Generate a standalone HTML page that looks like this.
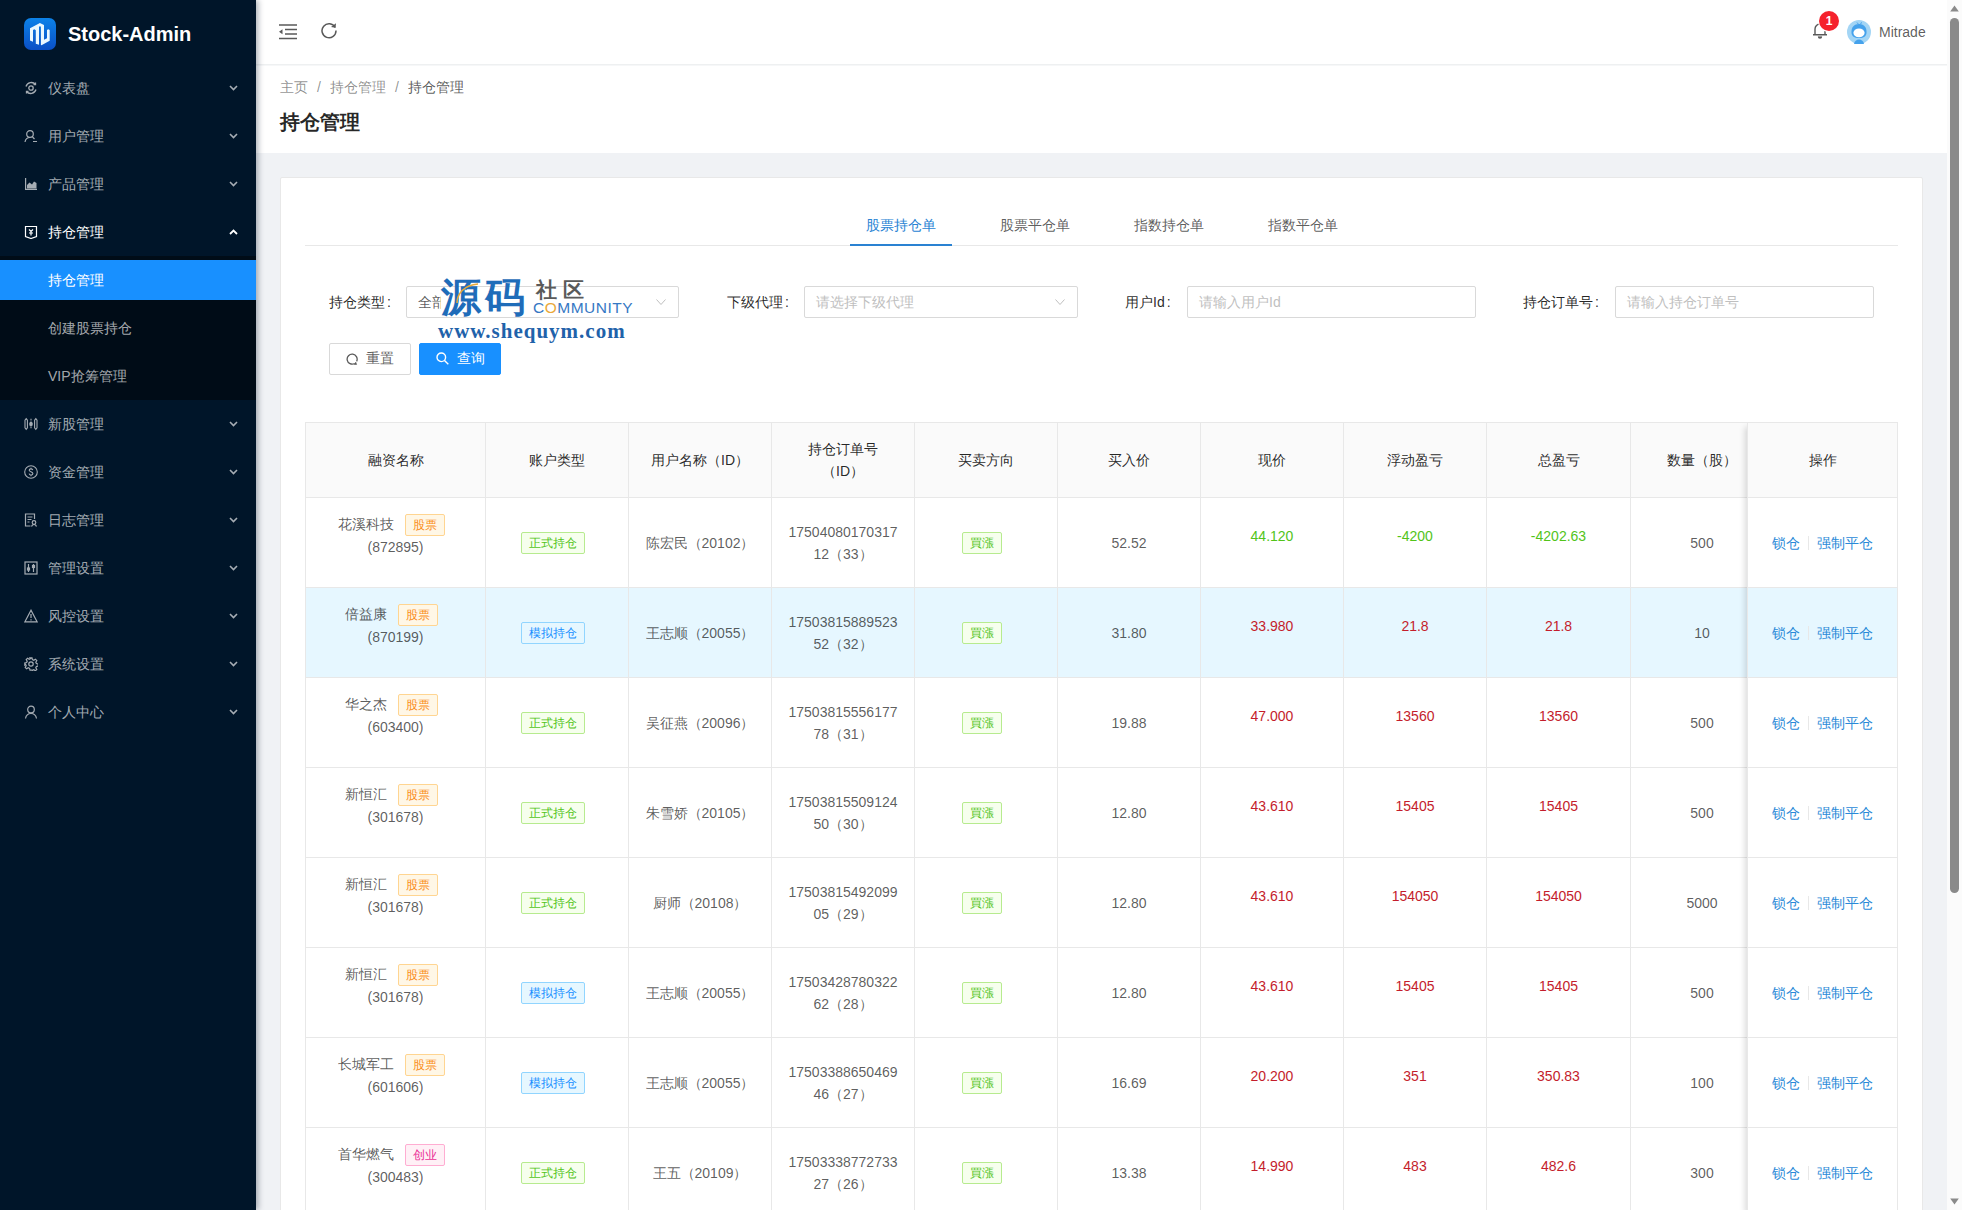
<!DOCTYPE html>
<html><head><meta charset="utf-8">
<style>
*{box-sizing:border-box;margin:0;padding:0}
html,body{width:1962px;height:1210px;overflow:hidden}
body{position:relative;background:#f0f2f5;font-family:"Liberation Sans",sans-serif;font-size:14px;color:rgba(0,0,0,.65)}
.abs{position:absolute}
/* sidebar */
#side{position:absolute;left:0;top:0;width:256px;height:1210px;background:#001529;z-index:5;box-shadow:2px 0 6px rgba(0,21,41,.35)}
.logo{position:absolute;left:24px;top:18px;width:32px;height:32px;border-radius:7px;background:linear-gradient(#0c82e8,#0a4fc6)}
.brand{position:absolute;left:68px;top:21px;font-size:20px;font-weight:bold;color:#fff;line-height:26px}
.mi{position:absolute;left:0;width:256px;height:40px;line-height:40px;color:rgba(255,255,255,.65)}
.mi .ic{position:absolute;left:24px;top:13px;width:14px;height:14px}
.mi .tx{position:absolute;left:48px;top:0}
.mi .ar{position:absolute;left:229px;top:17px;width:9px;height:6px}
.sub{position:absolute;left:0;top:256px;width:256px;height:144px;background:#000c17}
.act{background:#1890ff;color:#fff}
/* header */
#hdr{position:absolute;left:256px;top:0;width:1691px;height:64px;background:#fff;z-index:2}
#ph{position:absolute;left:256px;top:65px;width:1691px;height:88px;background:#fff}
/* scrollbar */
#sb{position:absolute;left:1947px;top:0;width:15px;height:1210px;background:#fbfbfb;z-index:6}
/* card */
#card{position:absolute;left:280px;top:177px;width:1643px;height:1100px;background:#fff;border:1px solid #e8e8e8;border-radius:2px}
.tabbar{position:absolute;left:24px;top:23px;width:1593px;height:45px;border-bottom:1px solid #e8e8e8}
.tab{position:absolute;top:0;height:45px;width:102px;text-align:center;line-height:49px;color:rgba(0,0,0,.65)}
.tab.on{color:#2a84d4}
.ink{position:absolute;left:569px;top:43px;width:102px;height:2px;background:#1890ff}
.lbl{position:absolute;top:108px;height:32px;line-height:32px;color:rgba(0,0,0,.85)}
.inp{position:absolute;top:108px;height:32px;border:1px solid #d9d9d9;border-radius:2px;line-height:30px;padding-left:11px;color:#bfbfbf}
.sel-ar{position:absolute;right:12px;top:12px;width:10px;height:6px}
.btn{position:absolute;top:165px;height:32px;width:82px;border-radius:2px;line-height:28px;padding-bottom:2px;text-align:center}
/* table */
#tbl{position:absolute;left:24px;top:244px;width:1593px;height:900px;border:1px solid #e8e8e8;border-bottom:0;overflow:hidden}
table{border-collapse:separate;border-spacing:0;table-layout:fixed}
th,td{border-right:1px solid #e8e8e8;border-bottom:1px solid #e8e8e8;text-align:center;vertical-align:middle;padding:0 16px;line-height:22px}
th{background:#fafafa;color:rgba(0,0,0,.85);font-weight:normal;height:75px}
td{height:90px}
tr.hv td{background:#e6f7ff}
.tag{display:inline-block;height:22px;line-height:20px;padding:0 7px;font-size:12px;border:1px solid;border-radius:2px;margin-right:8px;vertical-align:middle}
.t-or{color:#fa8c16;background:#fff7e6;border-color:#ffd591}
.t-gr{color:#52c41a;background:#f6ffed;border-color:#b7eb8f}
.t-bl{color:#1890ff;background:#e6f7ff;border-color:#91d5ff}
.t-mg{color:#eb2f96;background:#fff0f6;border-color:#ffadd2}
.g{color:#52c41a}
.r{color:#c41d2c}
.up{position:relative;top:-7px}
.nm{position:relative;top:-7px}
#fix{position:absolute;left:1441px;top:0;width:150px;border-left:1px solid #e8e8e8;box-shadow:-6px 0 6px -4px rgba(0,0,0,.15);background:#fff}
#fix table td,#fix table th{border-right:0}
.lk{color:#2a8ad8}
.dv{display:inline-block;width:1px;height:14px;background:#e8e8e8;margin:0 8px;vertical-align:middle;position:relative;top:-1px}
</style></head>
<body>
<div id="side">
  <div class="logo">
    <svg width="32" height="32" viewBox="0 0 32 32"><path fill="#eaf8ff" d="M6 22.6V10.2L15.9 5 20 6.9V21.8L23 20.3V12L24.3 11.2 25.7 12V22.7L17.5 27.2 16.9 27V8.4L15 8.6V26.8L11.8 25.8V12.2L10.4 11.3 9 12.1V23.8Z"/></svg>
  </div>
  <div class="brand">Stock-Admin</div>
  <!-- menu -->
  <div class="mi" style="top:68px"><svg class="ic" viewBox="0 0 14 14" fill="none" stroke="#a6adb4" stroke-width="1.3"><path d="M2 5.5A5.5 5.5 0 0 1 11.5 3.5M12 8.5A5.5 5.5 0 0 1 2.5 10.5"/><circle cx="7" cy="7" r="2.2"/><path d="M11.5 1.5v2h-2M2.5 12.5v-2h2"/></svg><span class="tx">仪表盘</span><svg class="ar" viewBox="0 0 9 6"><path d="M1 1l3.5 3.5L8 1" stroke="#a6adb4" stroke-width="1.6" fill="none"/></svg></div>
  <div class="mi" style="top:116px"><svg class="ic" viewBox="0 0 14 14" fill="none" stroke="#a6adb4" stroke-width="1.2"><circle cx="6" cy="5" r="3.3"/><path d="M1 13c.5-3 2.5-4.5 5-4.5M9 12.5h4M8.5 8l2 2"/></svg><span class="tx">用户管理</span><svg class="ar" viewBox="0 0 9 6"><path d="M1 1l3.5 3.5L8 1" stroke="#a6adb4" stroke-width="1.6" fill="none"/></svg></div>
  <div class="mi" style="top:164px"><svg class="ic" viewBox="0 0 14 14"><path d="M1 1v12h12v-1.2H2.2V1z" fill="#a6adb4"/><path d="M3 11.5V8l2.5-2.5 2.5 2 2-3 2.5 1.5v5.5z" fill="#a6adb4"/></svg><span class="tx">产品管理</span><svg class="ar" viewBox="0 0 9 6"><path d="M1 1l3.5 3.5L8 1" stroke="#a6adb4" stroke-width="1.6" fill="none"/></svg></div>
  <div class="mi" style="top:212px;color:#fff"><svg class="ic" viewBox="0 0 14 14" fill="none" stroke="#fff" stroke-width="1.2"><path d="M1.5 1.5h11v10l-5.5 2-5.5-2z"/><path d="M5 4.5l2 2 2-2M7 6.5v4M5 8h4"/></svg><span class="tx">持仓管理</span><svg class="ar" viewBox="0 0 9 6"><path d="M1 5l3.5-3.5L8 5" stroke="#fff" stroke-width="1.8" fill="none"/></svg></div>
  <div class="sub"></div>
  <div class="mi act" style="top:260px;color:#fff"><span class="tx">持仓管理</span></div>
  <div class="mi" style="top:308px"><span class="tx">创建股票持仓</span></div>
  <div class="mi" style="top:356px"><span class="tx">VIP抢筹管理</span></div>
  <div class="mi" style="top:404px"><svg class="ic" viewBox="0 0 14 14" fill="none" stroke="#a6adb4" stroke-width="1.1"><path d="M2.2 1.6L3.4 3.2V10.8L2.2 12.4 1 10.8V3.2z"/><path d="M11.8 1.6L13 3.2V10.8L11.8 12.4 10.6 10.8V3.2z"/><path d="M7 1.8v10.4" stroke-dasharray="1.6 1"/><rect x="5.9" y="5.2" width="2.2" height="3.6" rx="1.1" fill="#a6adb4"/></svg><span class="tx">新股管理</span><svg class="ar" viewBox="0 0 9 6"><path d="M1 1l3.5 3.5L8 1" stroke="#a6adb4" stroke-width="1.6" fill="none"/></svg></div>
  <div class="mi" style="top:452px"><svg class="ic" viewBox="0 0 14 14" fill="none" stroke="#a6adb4" stroke-width="1.1"><circle cx="7" cy="7" r="6.3"/><path d="M8.8 5.2C8.6 4.3 7.9 3.9 7 3.9 5.9 3.9 5.2 4.5 5.2 5.3 5.2 7 8.9 6.6 8.9 8.6 8.9 9.5 8.1 10.1 7 10.1 6 10.1 5.3 9.6 5.1 8.7M7 2.8v1.1M7 10.1v1.1"/></svg><span class="tx">资金管理</span><svg class="ar" viewBox="0 0 9 6"><path d="M1 1l3.5 3.5L8 1" stroke="#a6adb4" stroke-width="1.6" fill="none"/></svg></div>
  <div class="mi" style="top:500px"><svg class="ic" viewBox="0 0 14 14" fill="none" stroke="#a6adb4" stroke-width="1.2"><path d="M10.5 6V1H1.5v12h5"/><path d="M3.5 4h5M3.5 6.5h4M3.5 9h2"/><circle cx="10" cy="9.5" r="1.8"/><path d="M7.5 13.5c.5-1.5 1.5-2 2.5-2s2 .5 2.5 2"/></svg><span class="tx">日志管理</span><svg class="ar" viewBox="0 0 9 6"><path d="M1 1l3.5 3.5L8 1" stroke="#a6adb4" stroke-width="1.6" fill="none"/></svg></div>
  <div class="mi" style="top:548px"><svg class="ic" viewBox="0 0 14 14" fill="none" stroke="#a6adb4" stroke-width="1.2"><rect x="1" y="1" width="12" height="12"/><path d="M4.5 3v8M9.5 3v8"/><rect x="3.5" y="7" width="2" height="2" fill="#a6adb4"/><rect x="8.5" y="4.5" width="2" height="2" fill="#a6adb4"/></svg><span class="tx">管理设置</span><svg class="ar" viewBox="0 0 9 6"><path d="M1 1l3.5 3.5L8 1" stroke="#a6adb4" stroke-width="1.6" fill="none"/></svg></div>
  <div class="mi" style="top:596px"><svg class="ic" viewBox="0 0 14 14" fill="none" stroke="#a6adb4" stroke-width="1.2"><path d="M7 1.2L0.9 12.8h12.2z"/><path d="M7 5v4M7 10.2v1.2"/></svg><span class="tx">风控设置</span><svg class="ar" viewBox="0 0 9 6"><path d="M1 1l3.5 3.5L8 1" stroke="#a6adb4" stroke-width="1.6" fill="none"/></svg></div>
  <div class="mi" style="top:644px"><svg class="ic" viewBox="0 0 14 14" fill="none" stroke="#a6adb4" stroke-width="1.2"><path d="M6 .8h2l.4 1.8 1.4.6 1.6-1 1.4 1.4-1 1.6.6 1.4 1.8.4v2l-1.8.4-.6 1.4 1 1.6-1.4 1.4-1.6-1-1.4.6L8 13.2H6l-.4-1.8-1.4-.6-1.6 1-1.4-1.4 1-1.6-.6-1.4L.8 8V6l1.8-.4.6-1.4-1-1.6 1.4-1.4 1.6 1 1.4-.6z"/><circle cx="7" cy="7" r="2.2"/></svg><span class="tx">系统设置</span><svg class="ar" viewBox="0 0 9 6"><path d="M1 1l3.5 3.5L8 1" stroke="#a6adb4" stroke-width="1.6" fill="none"/></svg></div>
  <div class="mi" style="top:692px"><svg class="ic" viewBox="0 0 14 14" fill="none" stroke="#a6adb4" stroke-width="1.2"><circle cx="7" cy="4.5" r="3.3"/><path d="M1.5 13.5c.5-3 2.8-5 5.5-5s5 2 5.5 5"/></svg><span class="tx">个人中心</span><svg class="ar" viewBox="0 0 9 6"><path d="M1 1l3.5 3.5L8 1" stroke="#a6adb4" stroke-width="1.6" fill="none"/></svg></div>
</div>

<div id="hdr">
  <svg class="abs" style="left:23px;top:24px" width="18" height="16" viewBox="0 0 18 16"><path d="M0 1h18M6 5.5h12M6 10h12M0 14.5h18" stroke="#595959" stroke-width="1.6"/><path d="M0 7.7L3.5 5.2v5z" fill="#595959"/></svg>
  <svg class="abs" style="left:64px;top:21px" width="18" height="18" viewBox="0 0 18 18" fill="none" stroke="#595959" stroke-width="1.5"><path d="M15.2 6.5A7 7 0 1 0 16 9.5"/><path d="M15.8 1.8v5h-5" stroke-width="0"/><path d="M16 2.2L15.5 6.8 11 6" fill="#595959" stroke-width="0"/></svg>
  <!-- bell -->
  <svg class="abs" style="left:1556px;top:21px" width="16" height="18" viewBox="0 0 16 18" fill="none" stroke="#595959" stroke-width="1.4"><path d="M3 13.5V8a5 5 0 0 1 10 0v5.5M1 13.8h14"/><path d="M6.5 15.5a1.5 1.5 0 0 0 3 0" fill="#595959"/></svg>
  <div class="abs" style="left:1563px;top:11px;width:20px;height:20px;border-radius:10px;background:#f5222d;color:#fff;font-size:12px;font-weight:bold;line-height:20px;text-align:center;box-shadow:0 0 0 1px #fff">1</div>
  <!-- avatar -->
  <svg class="abs" style="left:1591px;top:20px" width="24" height="24" viewBox="0 0 24 24"><circle cx="12" cy="12" r="12" fill="#a3d5f5"/><path d="M4.5 13C4 7 7.5 4 12 4s8 3 7.5 9c-.3 3-2.5 5-7.5 5s-7.2-2-7.5-5z" fill="#45a2ec"/><ellipse cx="12" cy="12.8" rx="5.6" ry="4.4" fill="#fff"/><path d="M7 24c.5-3 2.5-4.5 5-4.5s4.5 1.5 5 4.5z" fill="#45a2ec"/><path d="M10 2.5l1.5 1.8M14.5 2.3l-1 2" stroke="#45a2ec" stroke-width="1"/></svg>
  <div class="abs" style="left:1623px;top:21px;line-height:22px;color:rgba(0,0,0,.65)">Mitrade</div>
</div>
<div class="abs" style="left:256px;top:64px;width:1691px;height:1px;background:#eef0f1;z-index:3"></div><div class="abs" style="left:256px;top:65px;width:1691px;height:1px;background:#f6f7f8;z-index:3"></div>
<div id="ph">
  <div class="abs" style="left:24px;top:11px;line-height:22px;color:rgba(0,0,0,.45)">主页<span style="margin:0 9px">/</span>持仓管理<span style="margin:0 9px">/</span><span style="color:rgba(0,0,0,.65)">持仓管理</span></div>
  <div class="abs" style="left:24px;top:43px;line-height:28px;font-size:20px;font-weight:bold;color:rgba(0,0,0,.85)">持仓管理</div>
</div>

<div id="sb">
  <svg class="abs" style="left:3px;top:5px" width="9" height="7" viewBox="0 0 9 7"><path d="M4.5 0.5L8.8 6.5H0.2z" fill="#8a8a8a"/></svg>
  <div class="abs" style="left:3px;top:18px;width:9px;height:875px;border-radius:4.5px;background:#8a8a8a"></div>
  <svg class="abs" style="left:3px;top:1198px" width="9" height="7" viewBox="0 0 9 7"><path d="M4.5 6.5L8.8 0.5H0.2z" fill="#8a8a8a"/></svg>
</div>

<div id="card">
  <div class="tabbar">
    <div class="tab on" style="left:545px">股票持仓单</div>
    <div class="tab" style="left:679px">股票平仓单</div>
    <div class="tab" style="left:813px">指数持仓单</div>
    <div class="tab" style="left:947px">指数平仓单</div>
    <div class="abs" style="left:545px;top:43px;width:102px;height:2px;background:#2a82d2"></div>
  </div>
  <!-- filters -->
  <div class="lbl" style="left:48px">持仓类型<span style="margin-left:2px">:</span></div>
  <div class="inp" style="left:125px;width:273px;color:rgba(0,0,0,.65)">全部<svg class="sel-ar" viewBox="0 0 10 6"><path d="M.5.5l4.5 5 4.5-5" stroke="#bfbfbf" fill="none"/></svg></div>
  <div class="lbl" style="left:446px">下级代理<span style="margin-left:2px">:</span></div>
  <div class="inp" style="left:523px;width:274px">请选择下级代理<svg class="sel-ar" viewBox="0 0 10 6"><path d="M.5.5l4.5 5 4.5-5" stroke="#bfbfbf" fill="none"/></svg></div>
  <div class="lbl" style="left:844px">用户Id<span style="margin-left:2px">:</span></div>
  <div class="inp" style="left:906px;width:289px">请输入用户Id</div>
  <div class="lbl" style="left:1242px">持仓订单号<span style="margin-left:2px">:</span></div>
  <div class="inp" style="left:1334px;width:259px">请输入持仓订单号</div>
  <div class="btn" style="left:48px;border:1px solid #d9d9d9;color:rgba(0,0,0,.65)"><svg style="vertical-align:-2px;margin-right:8px" width="12" height="12" viewBox="0 0 12 12" fill="none" stroke="#595959" stroke-width="1.3"><path d="M10.6 8.4A5 5 0 1 0 8.6 10.5"/><path d="M9.8 9.2l-1.6 2.2 2.4.1z" fill="#595959" stroke-width="0.6"/></svg>重置</div>
  <div class="btn" style="left:138px;background:#1890ff;border:1px solid #1890ff;color:#fff"><svg style="vertical-align:-2px;margin-right:8px" width="13" height="13" viewBox="0 0 13 13" fill="none" stroke="#fff" stroke-width="1.4"><circle cx="5.3" cy="5.3" r="4.3"/><path d="M8.5 8.5l3.8 3.8"/></svg>查询</div>

  <!-- TABLE -->
  <div id="tbl">
<table style="width:1468px">
<colgroup><col style="width:180px"><col style="width:143px"><col style="width:143px"><col style="width:143px"><col style="width:143px"><col style="width:143px"><col style="width:143px"><col style="width:143px"><col style="width:144px"><col style="width:143px"></colgroup>
<tr><th>融资名称</th><th>账户类型</th><th>用户名称（ID）</th><th>持仓订单号<br>（ID）</th><th>买卖方向</th><th>买入价</th><th>现价</th><th>浮动盈亏</th><th>总盈亏</th><th>数量（股）</th></tr>
<tr><td><div class="nm">花溪科技<span class="tag t-or" style="margin-left:11px">股票</span><br>(872895)</div></td><td><span class="tag t-gr">正式持仓</span></td><td>陈宏民（20102）</td><td>17504080170317<br>12（33）</td><td><span class="tag t-gr">買漲</span></td><td>52.52</td><td class="g"><span class="up">44.120</span></td><td class="g"><span class="up">-4200</span></td><td class="g"><span class="up">-4202.63</span></td><td>500</td></tr>
<tr class="hv"><td><div class="nm">倍益康<span class="tag t-or" style="margin-left:11px">股票</span><br>(870199)</div></td><td><span class="tag t-bl">模拟持仓</span></td><td>王志顺（20055）</td><td>17503815889523<br>52（32）</td><td><span class="tag t-gr">買漲</span></td><td>31.80</td><td class="r"><span class="up">33.980</span></td><td class="r"><span class="up">21.8</span></td><td class="r"><span class="up">21.8</span></td><td>10</td></tr>
<tr><td><div class="nm">华之杰<span class="tag t-or" style="margin-left:11px">股票</span><br>(603400)</div></td><td><span class="tag t-gr">正式持仓</span></td><td>吴征燕（20096）</td><td>17503815556177<br>78（31）</td><td><span class="tag t-gr">買漲</span></td><td>19.88</td><td class="r"><span class="up">47.000</span></td><td class="r"><span class="up">13560</span></td><td class="r"><span class="up">13560</span></td><td>500</td></tr>
<tr><td><div class="nm">新恒汇<span class="tag t-or" style="margin-left:11px">股票</span><br>(301678)</div></td><td><span class="tag t-gr">正式持仓</span></td><td>朱雪娇（20105）</td><td>17503815509124<br>50（30）</td><td><span class="tag t-gr">買漲</span></td><td>12.80</td><td class="r"><span class="up">43.610</span></td><td class="r"><span class="up">15405</span></td><td class="r"><span class="up">15405</span></td><td>500</td></tr>
<tr><td><div class="nm">新恒汇<span class="tag t-or" style="margin-left:11px">股票</span><br>(301678)</div></td><td><span class="tag t-gr">正式持仓</span></td><td>厨师（20108）</td><td>17503815492099<br>05（29）</td><td><span class="tag t-gr">買漲</span></td><td>12.80</td><td class="r"><span class="up">43.610</span></td><td class="r"><span class="up">154050</span></td><td class="r"><span class="up">154050</span></td><td>5000</td></tr>
<tr><td><div class="nm">新恒汇<span class="tag t-or" style="margin-left:11px">股票</span><br>(301678)</div></td><td><span class="tag t-bl">模拟持仓</span></td><td>王志顺（20055）</td><td>17503428780322<br>62（28）</td><td><span class="tag t-gr">買漲</span></td><td>12.80</td><td class="r"><span class="up">43.610</span></td><td class="r"><span class="up">15405</span></td><td class="r"><span class="up">15405</span></td><td>500</td></tr>
<tr><td><div class="nm">长城军工<span class="tag t-or" style="margin-left:11px">股票</span><br>(601606)</div></td><td><span class="tag t-bl">模拟持仓</span></td><td>王志顺（20055）</td><td>17503388650469<br>46（27）</td><td><span class="tag t-gr">買漲</span></td><td>16.69</td><td class="r"><span class="up">20.200</span></td><td class="r"><span class="up">351</span></td><td class="r"><span class="up">350.83</span></td><td>100</td></tr>
<tr><td><div class="nm">首华燃气<span class="tag t-mg" style="margin-left:11px">创业</span><br>(300483)</div></td><td><span class="tag t-gr">正式持仓</span></td><td>王五（20109）</td><td>17503338772733<br>27（26）</td><td><span class="tag t-gr">買漲</span></td><td>13.38</td><td class="r"><span class="up">14.990</span></td><td class="r"><span class="up">483</span></td><td class="r"><span class="up">482.6</span></td><td>300</td></tr>
</table>
<div id="fix"><table style="width:149px"><tr><th>操作</th></tr>
<tr><td style="padding:0"><span class="lk">锁仓</span><span class="dv"></span><span class="lk">强制平仓</span></td></tr>
<tr class="hv"><td style="padding:0"><span class="lk">锁仓</span><span class="dv"></span><span class="lk">强制平仓</span></td></tr>
<tr><td style="padding:0"><span class="lk">锁仓</span><span class="dv"></span><span class="lk">强制平仓</span></td></tr>
<tr><td style="padding:0"><span class="lk">锁仓</span><span class="dv"></span><span class="lk">强制平仓</span></td></tr>
<tr><td style="padding:0"><span class="lk">锁仓</span><span class="dv"></span><span class="lk">强制平仓</span></td></tr>
<tr><td style="padding:0"><span class="lk">锁仓</span><span class="dv"></span><span class="lk">强制平仓</span></td></tr>
<tr><td style="padding:0"><span class="lk">锁仓</span><span class="dv"></span><span class="lk">强制平仓</span></td></tr>
<tr><td style="padding:0"><span class="lk">锁仓</span><span class="dv"></span><span class="lk">强制平仓</span></td></tr>
</table></div>
  </div>
</div>

<!-- watermark -->
<div class="abs" style="left:441px;top:288px;width:40px;height:28px;background:#fff;z-index:3"></div>
<div class="abs" style="left:441px;top:272px;z-index:4;font-size:40px;line-height:50px;font-weight:bold;color:#1f6cb9;white-space:nowrap;letter-spacing:4px">源码</div>
<svg class="abs" style="left:452px;top:280px;z-index:5" width="32" height="28" viewBox="0 0 32 28"><path d="M5 23C5 14 12 5 26 4" stroke="#e8a93a" stroke-width="1.6" fill="none"/></svg>
<div class="abs" style="left:536px;top:278px;z-index:4;font-size:21px;line-height:24px;font-weight:bold;color:#5a5a5a;white-space:nowrap;letter-spacing:6px">社区</div>
<div class="abs" style="left:533px;top:299px;z-index:4;font-size:15.5px;line-height:18px;color:#3578c4;white-space:nowrap;letter-spacing:0.5px">C<span style="color:#eaa938">O</span>MMUNITY</div>
<div class="abs" style="left:438px;top:319px;z-index:4;font-family:'Liberation Serif',serif;font-size:21px;line-height:24px;font-weight:bold;color:#1f62aa;white-space:nowrap;letter-spacing:1px">www.shequym.com</div>

</body></html>
